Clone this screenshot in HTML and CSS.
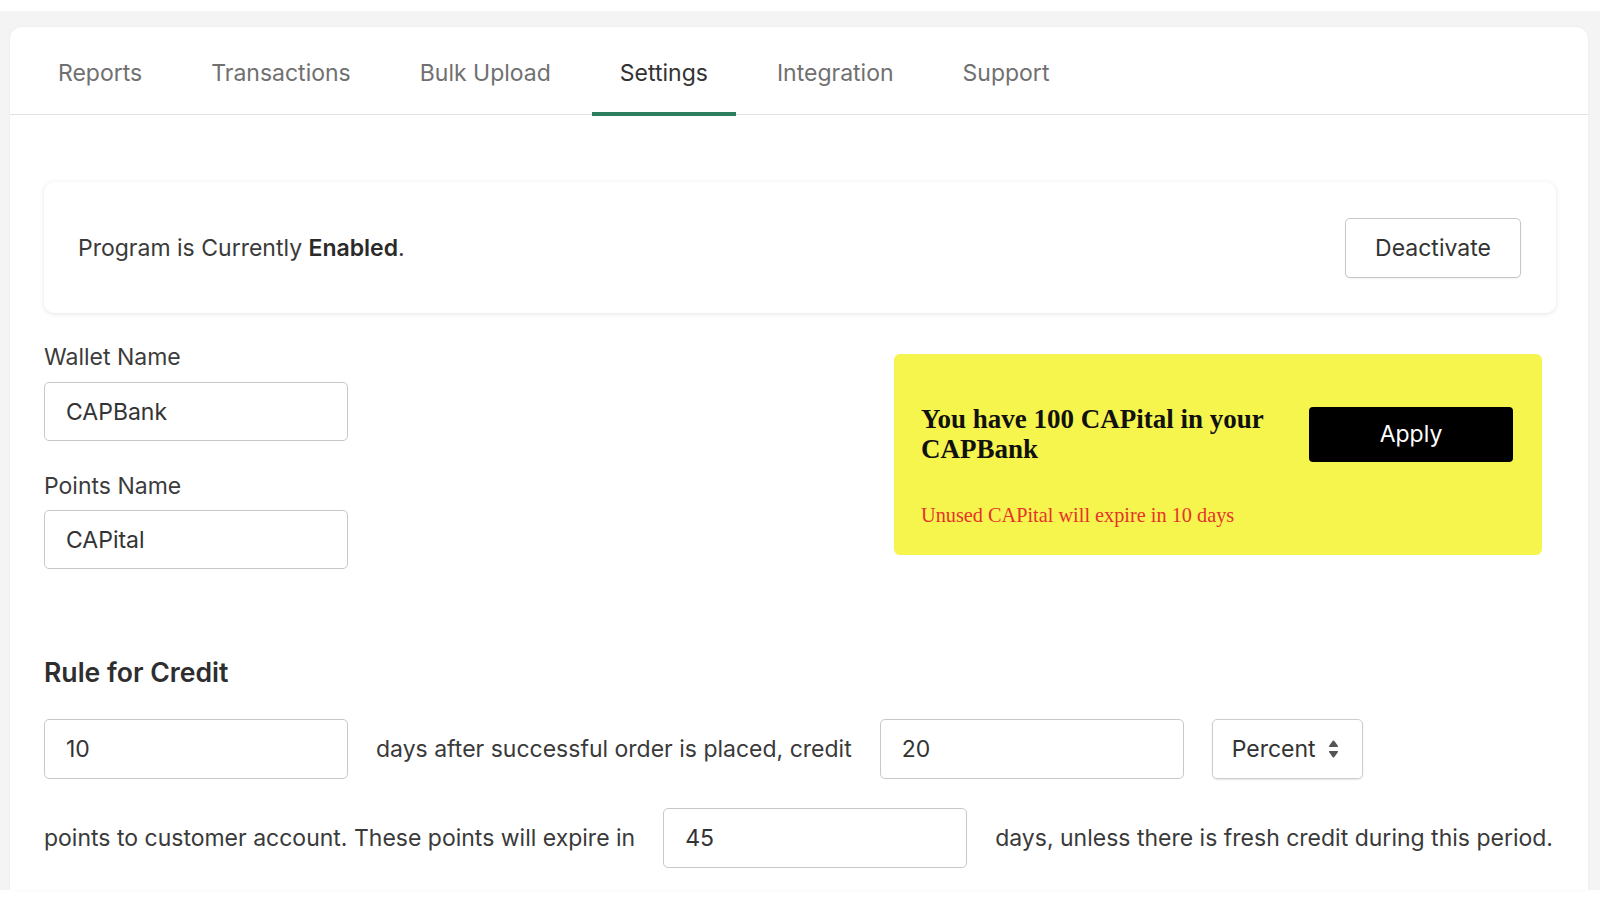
FILE: index.html
```html
<!DOCTYPE html>
<html lang="en">
<head>
<meta charset="utf-8">
<title>Settings</title>
<link rel="stylesheet" href="styles.css">
</head>
<body>
<div class="page">
  <div class="card">
    <nav class="tabs">
      <a class="tab">Reports</a>
      <a class="tab">Transactions</a>
      <a class="tab">Bulk Upload</a>
      <a class="tab active">Settings</a>
      <a class="tab">Integration</a>
      <a class="tab">Support</a>
    </nav>
    <div class="content">
      <div class="status">
        <p class="status-text">Program is Currently <strong>Enabled</strong>.</p>
        <button class="btn-outline">Deactivate</button>
      </div>

      <div class="wallet-row">
        <div class="fields">
          <label class="label">Wallet Name</label>
          <div class="input">CAPBank</div>
          <label class="label second">Points Name</label>
          <div class="input">CAPital</div>
        </div>
        <div class="promo">
          <div class="promo-top">
            <h3 class="promo-title">You have 100 CAPital in your CAPBank</h3>
            <button class="btn-apply">Apply</button>
          </div>
          <p class="promo-note">Unused CAPital will expire in 10 days</p>
        </div>
      </div>

      <h2 class="section-title">Rule for Credit</h2>
      <div class="rule-row">
        <div class="input">10</div>
        <span class="rule-text">days after successful order is placed, credit</span>
        <div class="input">20</div>
        <div class="select">
          <span>Percent</span>
          <svg class="sel-icon" width="11" height="20" viewBox="0 0 11 20"><path d="M5.5 1.5 Q6 1.5 6.4 2 L10 7 Q10.4 8 9.3 8 L1.7 8 Q0.6 8 1 7 L4.6 2 Q5 1.5 5.5 1.5 Z" fill="#555"/><path d="M5.5 18.5 Q6 18.5 6.4 18 L10 13 Q10.4 12 9.3 12 L1.7 12 Q0.6 12 1 13 L4.6 18 Q5 18.5 5.5 18.5 Z" fill="#555"/></svg>
        </div>
      </div>
      <div class="rule-row second-row">
        <span class="rule-text">points to customer account. These points will expire in</span>
        <div class="input">45</div>
        <span class="rule-text">days, unless there is fresh credit during this period.</span>
      </div>
    </div>
  </div>
</div>
</body>
</html>
```

FILE: styles.css
```css
html, body {
  margin: 0;
  background: #fff;
  height: 100%;
  overflow: hidden;
}
body {
  font-family: Inter, "Noto Sans", sans-serif;
  color: #333;
}
.page {
  margin-top: 11px;
  background: #f4f4f4;
  padding: 16px 12px 0 10px;
}
.card {
  background: #fff;
  border-radius: 12px 12px 0 0;
  box-shadow: 0 0 3px rgba(0, 0, 0, 0.05);
}
.tabs {
  display: flex;
  gap: 13px;
  padding-left: 20px;
  height: 88px;
  box-sizing: border-box;
  border-bottom: 1px solid #e3e3e3;
}
.tab {
  box-sizing: border-box;
  height: 89px;
  margin-bottom: -1px;
  padding: 6px 28px 0;
  display: flex;
  align-items: center;
  border-bottom: 4px solid transparent;
  font-size: 23px;
  color: #707070;
}
.tab.active {
  color: #333;
  border-bottom-color: #2e7d5e;
}
.content {
  padding: 67px 32px 22px 34px;
}
.status {
  box-sizing: border-box;
  height: 131px;
  display: flex;
  align-items: center;
  justify-content: space-between;
  padding: 0 35px 0 34px;
  border-radius: 10px;
  box-shadow: 0 1px 5px rgba(0, 0, 0, 0.11);
}
.status-text {
  margin: 0;
  font-size: 23px;
  color: #3a3a3a;
}
.status-text strong {
  font-weight: 600;
  color: #2a2a2a;
}
.btn-outline {
  width: 176px;
  height: 60px;
  border: 1px solid #c6c6c6;
  border-radius: 5px;
  background: #fff;
  font-family: Inter, "Noto Sans", sans-serif;
  font-size: 23px;
  color: #333;
  box-shadow: 0 1px 2px rgba(0, 0, 0, 0.06);
}
.wallet-row {
  display: flex;
  justify-content: space-between;
  align-items: flex-start;
  margin-top: 30px;
}
.fields {
  display: flex;
  flex-direction: column;
  width: 304px;
}
.label {
  font-size: 23px;
  line-height: 28px;
  color: #3c3c3c;
  margin-bottom: 11px;
}
.label.second {
  margin-top: 31px;
  margin-bottom: 10px;
}
.input {
  box-sizing: border-box;
  width: 304px;
  height: 59px;
  border: 1px solid #c8c8c8;
  border-radius: 5px;
  padding-left: 21px;
  display: flex;
  align-items: center;
  font-size: 23px;
  color: #333;
  flex-shrink: 0;
}
.promo {
  box-sizing: border-box;
  width: 648px;
  height: 201px;
  margin-top: 11px;
  margin-right: 14px;
  background: #f6f54e;
  border-radius: 6px;
  padding: 50px 29px 0 27px;
}
.promo-top {
  display: flex;
  align-items: center;
  justify-content: space-between;
}
.promo-title {
  margin: 0;
  width: 370px;
  font-family: "Liberation Serif", "Times New Roman", serif;
  font-weight: bold;
  font-size: 27px;
  line-height: 30px;
  color: #111;
}
.btn-apply {
  width: 204px;
  height: 55px;
  border: none;
  border-radius: 4px;
  background: #000;
  color: #fff;
  font-family: Inter, "Noto Sans", sans-serif;
  font-size: 23px;
}
.promo-note {
  margin: 39px 0 0;
  font-family: "Liberation Serif", "Times New Roman", serif;
  font-size: 20.3px;
  line-height: 24px;
  color: #e5332a;
}
.section-title {
  margin: 87px 0 0;
  font-size: 26.6px;
  line-height: 32px;
  font-weight: 600;
  color: #2e2e2e;
}
.rule-row {
  display: flex;
  align-items: center;
  gap: 28px;
  margin-top: 31px;
}
.rule-row .input {
  height: 60px;
}
.rule-row.second-row {
  margin-top: 29px;
}
.rule-text {
  font-size: 23px;
  color: #3a3a3a;
  white-space: nowrap;
}
.select {
  box-sizing: border-box;
  width: 151px;
  height: 60px;
  border: 1px solid #cdcdcd;
  border-radius: 5px;
  box-shadow: 0 1px 2px rgba(0, 0, 0, 0.1);
  display: flex;
  align-items: center;
  padding-left: 19px;
  gap: 12px;
  font-size: 23px;
  color: #333;
}
.sel-icon {
  display: block;
}
```
